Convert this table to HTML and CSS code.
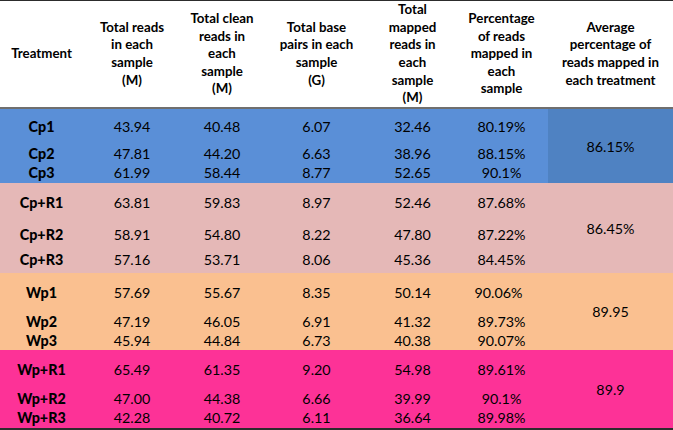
FILE: index.html
```html
<!DOCTYPE html>
<html>
<head>
<meta charset="utf-8">
<link rel="stylesheet" href="styles.css">
</head>
<body>
<div class="table">
  <div class="head">
    <div class="hc">Treatment</div>
    <div class="hc">Total reads<br>in each<br>sample<br>(M)</div>
    <div class="hc">Total clean<br>reads in<br>each<br>sample<br>(M)</div>
    <div class="hc">Total base<br>pairs in each<br>sample<br>(G)</div>
    <div class="hc">Total<br>mapped<br>reads in<br>each<br>sample<br>(M)</div>
    <div class="hc">Percentage<br>of reads<br>mapped in<br>each<br>sample</div>
    <div class="hc">Average<br>percentage of<br>reads mapped in<br>each treatment</div>
  </div>

  <div class="group g-cp">
    <div class="c t">Cp1</div><div class="c">43.94</div><div class="c">40.48</div><div class="c">6.07</div><div class="c">32.46</div><div class="c">80.19%</div>
    <div class="avg avg-cp">86.15%</div>
    <div class="c t">Cp2</div><div class="c">47.81</div><div class="c">44.20</div><div class="c">6.63</div><div class="c">38.96</div><div class="c">88.15%</div>
    <div class="c t">Cp3</div><div class="c">61.99</div><div class="c">58.44</div><div class="c">8.77</div><div class="c">52.65</div><div class="c">90.1%</div>
  </div>

  <div class="group g-cpr">
    <div class="c t">Cp+R1</div><div class="c">63.81</div><div class="c">59.83</div><div class="c">8.97</div><div class="c">52.46</div><div class="c">87.68%</div>
    <div class="avg">86.45%</div>
    <div class="c t">Cp+R2</div><div class="c">58.91</div><div class="c">54.80</div><div class="c">8.22</div><div class="c">47.80</div><div class="c">87.22%</div>
    <div class="c t">Cp+R3</div><div class="c">57.16</div><div class="c">53.71</div><div class="c">8.06</div><div class="c">45.36</div><div class="c">84.45%</div>
  </div>

  <div class="group g-wp">
    <div class="c t">Wp1</div><div class="c">57.69</div><div class="c">55.67</div><div class="c">8.35</div><div class="c">50.14</div><div class="c shift">90.06%</div>
    <div class="avg">89.95</div>
    <div class="c t">Wp2</div><div class="c">47.19</div><div class="c">46.05</div><div class="c">6.91</div><div class="c">41.32</div><div class="c">89.73%</div>
    <div class="c t">Wp3</div><div class="c">45.94</div><div class="c">44.84</div><div class="c">6.73</div><div class="c">40.38</div><div class="c">90.07%</div>
  </div>

  <div class="group g-wpr">
    <div class="c t">Wp+R1</div><div class="c">65.49</div><div class="c">61.35</div><div class="c">9.20</div><div class="c">54.98</div><div class="c">89.61%</div>
    <div class="avg">89.9</div>
    <div class="c t">Wp+R2</div><div class="c">47.00</div><div class="c">44.38</div><div class="c">6.66</div><div class="c">39.99</div><div class="c">90.1%</div>
    <div class="c t">Wp+R3</div><div class="c">42.28</div><div class="c">40.72</div><div class="c">6.11</div><div class="c">36.64</div><div class="c">89.98%</div>
  </div>
</div>
</body>
</html>
```

FILE: styles.css
```css
html, body {
  margin: 0;
  padding: 0;
  background: #ffffff;
}

.table {
  width: 673px;
  height: 430px;
  font-family: Lato, "Liberation Sans", sans-serif;
  color: #000000;
  border-top: 1px solid #2c2c2c;
  border-bottom: 2px solid #2c2c2c;
  box-sizing: border-box;
  overflow: hidden;
}

.head,
.group {
  display: grid;
  grid-template-columns: 83px 98px 82px 107px 85px 93px 125px;
}

.head {
  height: 106px;
  border-bottom: 2px solid #6f6f6f;
  background: #ffffff;
}

.hc {
  display: flex;
  align-items: center;
  justify-content: center;
  text-align: center;
  font-weight: 700;
  font-size: 13.3px;
  line-height: 17.6px;
  white-space: nowrap;
}

.c {
  display: flex;
  align-items: center;
  justify-content: center;
  font-size: 14.3px;
  line-height: 16px;
}

.t {
  font-weight: 900;
}

.shift {
  padding-right: 6px;
}

.avg {
  grid-column: 7;
  grid-row: 1 / 4;
  display: flex;
  align-items: center;
  justify-content: center;
  font-size: 14.3px;
}

.g-cp {
  grid-template-rows: 36px 18px 20px;
  background: #5a8fd7;
}

.avg-cp {
  background: #4f82c2;
}

.g-cpr {
  grid-template-rows: 40px 24px 26px;
  background: #e5b8b7;
}

.g-wp {
  grid-template-rows: 40px 18px 19px;
  background: #fac090;
}

.g-wpr {
  grid-template-rows: 40px 18px 20px;
  background: #fd3297;
}
```
